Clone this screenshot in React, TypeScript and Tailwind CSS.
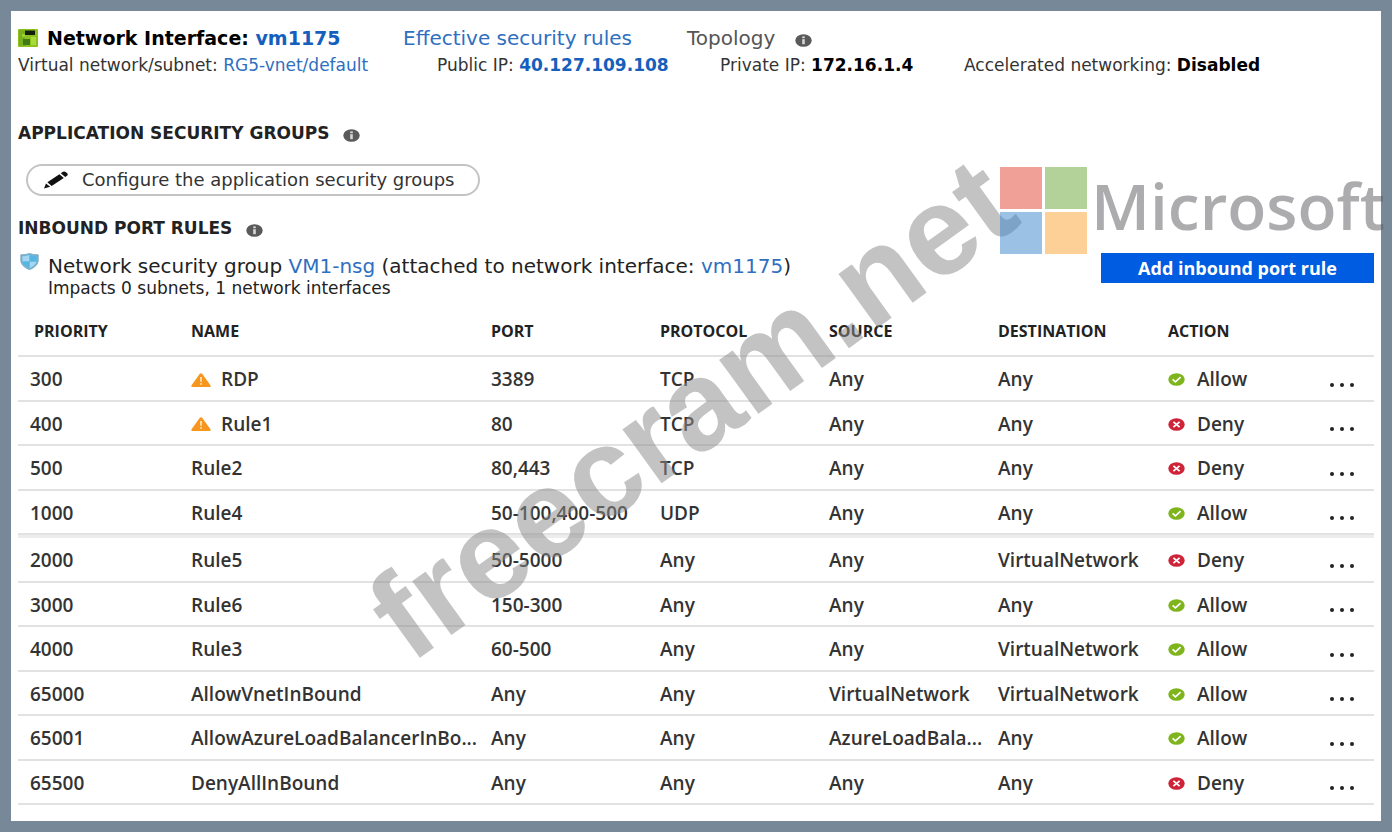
import React from "react";

type Rule = {
  priority: string;
  name: string;
  port: string;
  protocol: string;
  source: string;
  destination: string;
  action: "Allow" | "Deny";
  warning?: boolean;
};

const customRules: Rule[] = [
  { priority: "300", name: "RDP", port: "3389", protocol: "TCP", source: "Any", destination: "Any", action: "Allow", warning: true },
  { priority: "400", name: "Rule1", port: "80", protocol: "TCP", source: "Any", destination: "Any", action: "Deny", warning: true },
  { priority: "500", name: "Rule2", port: "80,443", protocol: "TCP", source: "Any", destination: "Any", action: "Deny" },
  { priority: "1000", name: "Rule4", port: "50-100,400-500", protocol: "UDP", source: "Any", destination: "Any", action: "Allow" },
];

const remainingRules: Rule[] = [
  { priority: "2000", name: "Rule5", port: "50-5000", protocol: "Any", source: "Any", destination: "VirtualNetwork", action: "Deny" },
  { priority: "3000", name: "Rule6", port: "150-300", protocol: "Any", source: "Any", destination: "Any", action: "Allow" },
  { priority: "4000", name: "Rule3", port: "60-500", protocol: "Any", source: "Any", destination: "VirtualNetwork", action: "Allow" },
  { priority: "65000", name: "AllowVnetInBound", port: "Any", protocol: "Any", source: "VirtualNetwork", destination: "VirtualNetwork", action: "Allow" },
  { priority: "65001", name: "AllowAzureLoadBalancerInBo...", port: "Any", protocol: "Any", source: "AzureLoadBala...", destination: "Any", action: "Allow" },
  { priority: "65500", name: "DenyAllInBound", port: "Any", protocol: "Any", source: "Any", destination: "Any", action: "Deny" },
];

function NicIcon() {
  return (
    <svg className="h-[18px] w-5 shrink-0" viewBox="0 0 20 18" aria-hidden="true">
      <rect width="20" height="18" rx="1" fill="#8cc21e" />
      <rect x="1" y="1" width="6" height="16" fill="#79b020" />
      <rect x="7" y="1.5" width="10" height="4.5" fill="#14200a" />
      <rect x="5" y="10" width="7" height="6" fill="#3f7a12" />
      <rect x="13" y="8" width="5" height="8" fill="#a9dc3a" />
      <rect x="4" y="5" width="3" height="3" fill="#9ccf30" />
    </svg>
  );
}

function InfoIcon() {
  return (
    <svg className="mt-1 h-[13px] w-[17px] shrink-0" viewBox="0 0 17 13" aria-hidden="true">
      <ellipse cx="8.5" cy="6.5" rx="8.2" ry="6.3" fill="#5a5a5a" />
      <rect x="7.2" y="5.2" width="2.6" height="5" fill="#d6d6d6" />
      <rect x="7.2" y="2.4" width="2.6" height="1.8" fill="#d6d6d6" />
    </svg>
  );
}

function PencilIcon() {
  return (
    <svg className="h-[18px] w-6 shrink-0" viewBox="0 0 24 18" aria-hidden="true">
      <path d="M0 17.5 2 12.4 6.2 15.8ZM3.4 11.2 15.4 3.2 19.8 6.9 7.6 14.9ZM16.8 2.2 19 .8Q20.6.1 22 1.2L23.4 2.5Q24.2 3.8 23 4.8L21.2 6Z" fill="#111" />
    </svg>
  );
}

function ShieldIcon() {
  return (
    <svg className="h-[17px] w-[19px] shrink-0" viewBox="0 0 19 17" aria-hidden="true">
      <path d="M.8 1.8Q5.8 2 9.5.4 13.2 2 18.2 1.8V8Q17.6 13.4 9.5 16.7 1.4 13.4.8 8Z" fill="#6fb9de" stroke="#7e9cae" strokeWidth=".8" />
      <path d="M2.4 3.2Q6.5 3.2 9.5 2V8.5H2.6ZM9.5 8.5H16.4Q15.6 12.4 9.5 15.2Z" fill="#a5d8f0" />
      <path d="M9.5 2Q12.5 3.2 16.6 3.2L16.4 8.5H9.5ZM2.6 8.5H9.5V15.2Q3.4 12.4 2.6 8.5Z" fill="#58b4e0" />
    </svg>
  );
}

function WarningIcon() {
  return (
    <svg className="h-[14px] w-5 shrink-0" viewBox="0 0 20 14" aria-hidden="true">
      <path d="M8.8.8Q10-.3 11.2.8L19.6 12.4Q20 13.8 18.6 14H1.4Q0 13.8.4 12.4Z" fill="#f6961e" />
      <path d="M9 4H11L10.7 9H9.3Z" fill="#ffe3b5" />
      <rect x="9.1" y="10.2" width="1.8" height="1.6" fill="#ffe3b5" />
    </svg>
  );
}

function StatusIcon({ action }: { action: Rule["action"] }) {
  return (
    <svg className="h-[13px] w-[17px] shrink-0" viewBox="0 0 17 13" aria-hidden="true">
      <ellipse cx="8.5" cy="6.5" rx="8.2" ry="6.3" fill={action === "Allow" ? "#7fb51c" : "#cf2338"} />
      {action === "Allow" ? (
        <path d="M4.6 6.4 7.4 8.8 12.6 4.2" fill="none" stroke="#fff" strokeWidth="1.7" />
      ) : (
        <path d="M5.4 3.9 11.6 9.1M11.6 3.9 5.4 9.1" fill="none" stroke="#fff" strokeWidth="1.8" />
      )}
    </svg>
  );
}

function RuleRow({ rule }: { rule: Rule }) {
  return (
    <tr className="odd:h-[45px] even:h-[44px] [&>td]:border-b-2 [&>td]:border-[#e2e2e2] [&>td]:pt-[2px]">
      <td className="pl-3">{rule.priority}</td>
      <td>
        <div className="flex items-center gap-[10px]">
          {rule.warning && <WarningIcon />}
          <span>{rule.name}</span>
        </div>
      </td>
      <td>{rule.port}</td>
      <td>{rule.protocol}</td>
      <td>{rule.source}</td>
      <td>{rule.destination}</td>
      <td>
        <div className="flex items-center gap-3">
          <StatusIcon action={rule.action} />
          <span>{rule.action}</span>
        </div>
      </td>
      <td>
        <button type="button" aria-label={`More actions for ${rule.name}`} className="flex h-[14px] items-end gap-[6px]">
          <span className="size-1 rounded-full bg-[#222]" />
          <span className="size-1 rounded-full bg-[#222]" />
          <span className="size-1 rounded-full bg-[#222]" />
        </button>
      </td>
    </tr>
  );
}

function SectionHeading({ children }: { children: React.ReactNode }) {
  return (
    <div className="flex h-6 items-center gap-[14px]">
      <h2 className="pt-[2px] text-[17px] font-bold">{children}</h2>
      <InfoIcon />
    </div>
  );
}

export default function App() {
  return (
    <div className="flex min-h-screen bg-[#778899] p-[11px] font-['DejaVu_Sans','Open_Sans',sans-serif] text-[#222]">
      <main className="relative flex-1 bg-white px-[7px] pt-3 pb-4 whitespace-nowrap">
        <div className="grid h-7 grid-cols-[385px_284px_1fr] items-center text-[20px]">
          <h1 className="flex items-center gap-[9px] text-[19px] font-bold text-black">
            <NicIcon />
            <span>
              Network Interface: <a href="#nic" className="text-[#1560bd]">vm1175</a>
            </span>
          </h1>
          <a href="#effective" className="text-[#2f6fbf]">Effective security rules</a>
          <div className="flex items-center gap-5 text-[#555]">
            <a href="#topology">Topology</a>
            <InfoIcon />
          </div>
        </div>
        <div className="grid h-7 grid-cols-[419px_283px_244px_1fr] items-center pt-[2px] text-[17px] text-[#333]">
          <p>Virtual network/subnet: <a href="#vnet" className="text-[#2f6fbf]">RG5-vnet/default</a></p>
          <p>Public IP: <a href="#ip" className="font-bold text-[#1560bd]">40.127.109.108</a></p>
          <p>Private IP: <strong className="text-black">172.16.1.4</strong></p>
          <p>Accelerated networking: <strong className="text-black">Disabled</strong></p>
        </div>

        <section className="mt-[42px]">
          <SectionHeading>APPLICATION SECURITY GROUPS</SectionHeading>
          <button type="button" className="mt-[19px] ml-2 flex h-8 w-[454px] items-center gap-[14px] rounded-full border-2 border-[#c4c4c4] pl-4 text-lg text-[#333]">
            <PencilIcon />
            Configure the application security groups
          </button>
        </section>

        <section className="mt-5">
          <SectionHeading>INBOUND PORT RULES</SectionHeading>
          <div className="mt-[13px] flex items-start justify-between">
            <div className="flex items-start gap-[9px] pl-[2px]">
              <ShieldIcon />
              <div>
                <p className="h-[26px] text-[20px] leading-[26px]">
                  Network security group <a href="#nsg" className="text-[#2f6fbf]">VM1-nsg</a> (attached to network interface: <a href="#nic" className="text-[#2f6fbf]">vm1175</a>)
                </p>
                <p className="text-[17px] leading-[18px]">Impacts 0 subnets, 1 network interfaces</p>
              </div>
            </div>
            <button type="button" className="h-[30px] w-[273px] bg-[#005ce0] font-['Open_Sans','Noto_Sans',sans-serif] text-lg font-bold text-white">
              Add inbound port rule
            </button>
          </div>

          <table className="mt-[9px] w-full table-fixed border-separate border-spacing-0 text-left font-['Open_Sans','Noto_Sans',sans-serif] text-[19px] font-semibold text-[#333]">
            <colgroup>
              <col className="w-[173px]" />
              <col className="w-[300px]" />
              <col className="w-[169px]" />
              <col className="w-[169px]" />
              <col className="w-[169px]" />
              <col className="w-[170px]" />
              <col className="w-[162px]" />
              <col />
            </colgroup>
            <thead>
              <tr className="h-[51px] text-base text-[#222] [&>th]:border-b-2 [&>th]:border-[#e2e2e2]">
                <th className="pl-4">PRIORITY</th>
                <th>NAME</th>
                <th>PORT</th>
                <th>PROTOCOL</th>
                <th>SOURCE</th>
                <th>DESTINATION</th>
                <th>ACTION</th>
                <th aria-label="Menu" />
              </tr>
            </thead>
            <tbody>
              {customRules.map((rule) => <RuleRow key={rule.priority} rule={rule} />)}
            </tbody>
            <tbody aria-hidden="true">
              <tr>
                <td colSpan={8} className="h-[3px] bg-[#ededed] p-0" />
              </tr>
            </tbody>
            <tbody>
              {remainingRules.map((rule) => <RuleRow key={rule.priority} rule={rule} />)}
            </tbody>
          </table>
        </section>

        <div className="pointer-events-none absolute top-[670px] left-[411px] flex h-0 origin-left -rotate-[35.8deg] items-end font-['Liberation_Sans',Arial,sans-serif] text-[126px] leading-[1] font-bold text-[#8c8c8c]/52">
          freecram.net
        </div>

        <div className="pointer-events-none absolute top-[156px] right-[-4px] flex items-start gap-1 font-['Open_Sans','Noto_Sans',sans-serif] opacity-50">
          <div className="grid grid-cols-2 gap-[3px]">
            <span className="size-[42px] bg-[#e24432]" />
            <span className="size-[42px] bg-[#6aa735]" />
            <span className="size-[42px] bg-[#3985cb]" />
            <span className="size-[42px] bg-[#fca233]" />
          </div>
          <span className="text-[64px] leading-[78px] font-semibold text-[#5c5c60]">Microsoft</span>
        </div>
      </main>
    </div>
  );
}
